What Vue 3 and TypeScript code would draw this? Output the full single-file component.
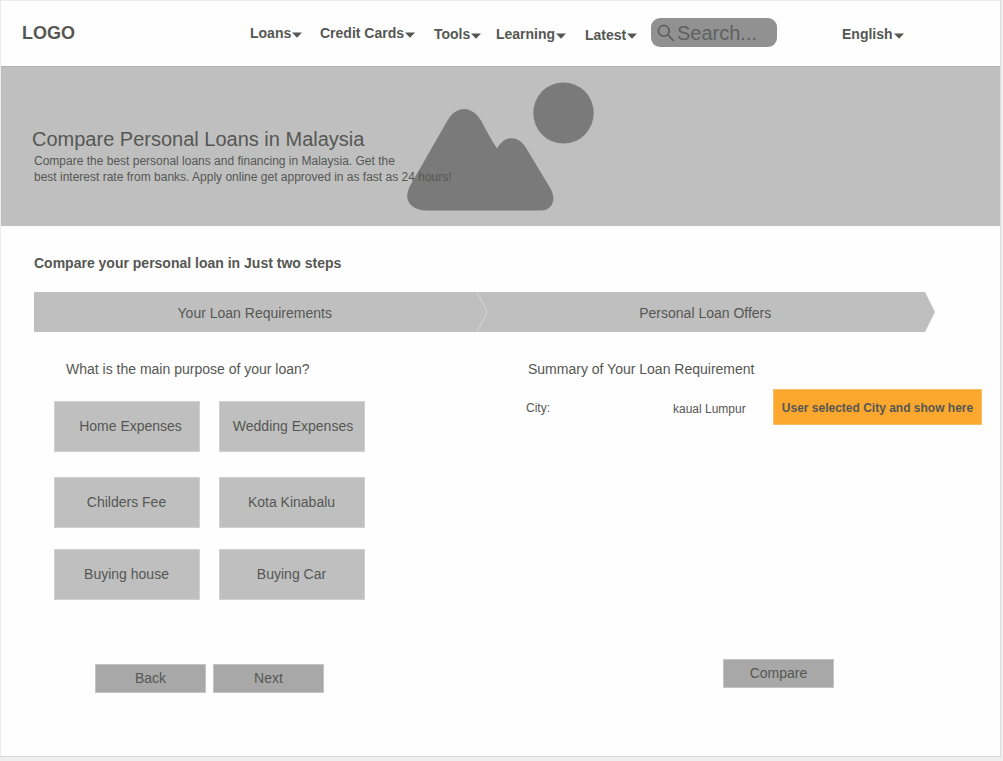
<script setup lang="ts">
interface NavItem {
  label: string
  key: string
}

const navItems: NavItem[] = [
  { label: 'Loans', key: 'loans' },
  { label: 'Credit Cards', key: 'cards' },
  { label: 'Tools', key: 'tools' },
  { label: 'Learning', key: 'learning' },
  { label: 'Latest', key: 'latest' },
]

const purposes: string[] = [
  'Home Expenses',
  'Wedding Expenses',
  'Childers Fee',
  'Kota Kinabalu',
  'Buying house',
  'Buying Car',
]
</script>

<template>
  <div class="page">
    <header class="header">
      <div class="logo">LOGO</div>
      <a v-for="item in navItems" :key="item.key" class="nav-item" :class="item.key">
        <span>{{ item.label }}</span>
        <svg class="caret" viewBox="0 0 10 6"><path d="M0 0.5H10L5 5.7Z" /></svg>
      </a>
      <div class="search">
        <svg class="lens" viewBox="0 0 18 18">
          <circle cx="6.8" cy="6.8" r="5.4" />
          <path d="M10.6 10.6L16.8 16.8" />
        </svg>
        <span>Search...</span>
      </div>
      <a class="nav-item english">
        <span>English</span>
        <svg class="caret" viewBox="0 0 10 6"><path d="M0 0.5H10L5 5.7Z" /></svg>
      </a>
    </header>

    <section class="hero">
      <svg class="landscape" viewBox="0 0 188 130">
        <ellipse cx="156.5" cy="31" rx="30.2" ry="30.6" />
        <path d="M40.5 38.500C49 23 65 23 74 38.500C78.500 46.500 84 58 90.300 66.500C97 53 111 53 118.500 65L143.500 106.500C150 118 145 128.500 134 128.500H20C4 128.500-3 118 1.500 107.500C2.500 104.500 4 102 5.500 99.500Z" />
      </svg>
      <div class="hero-copy">
        <h1>Compare Personal Loans in Malaysia</h1>
        <p>Compare the best personal loans and financing in Malaysia. Get the<br />best interest rate from banks. Apply online get approved in as fast as 24 hours!</p>
      </div>
    </section>

    <main class="content">
      <h2>Compare your personal loan in Just two steps</h2>
      <div class="steps">
        <div class="step first">Your Loan Requirements</div>
        <div class="step second">Personal Loan Offers</div>
        <svg class="divider" viewBox="0 0 12 40"><path d="M1 0L11 20L1 40" /></svg>
      </div>

      <div class="columns">
        <section class="requirements">
          <h3>What is the main purpose of your loan?</h3>
          <div class="purposes">
            <button v-for="purpose in purposes" :key="purpose" class="purpose"><span>{{ purpose }}</span></button>
          </div>
          <div class="actions">
            <button class="action">Back</button>
            <button class="action">Next</button>
          </div>
        </section>
        <section class="summary">
          <h3>Summary of Your Loan Requirement</h3>
          <div class="summary-row">
            <span class="term">City:</span>
            <span class="value">kaual Lumpur</span>
            <span class="note">User selected City and show here</span>
          </div>
          <button class="action compare">Compare</button>
        </section>
      </div>
    </main>
  </div>
</template>

<style>
body {
  margin: 0;
  background: #efefef;
}
</style>

<style scoped>
.page {
  box-sizing: border-box;
  width: 1001px;
  height: 757px;
  border: 1px solid #ececec;
  border-right-color: #dedede;
  border-bottom-color: #d8d8d8;
  background: #fefefe;
  color: #555753;
  font-family: "Liberation Sans", Arial, sans-serif;
  font-size: 14px;
  overflow: hidden;
}

h1, h2, h3, p {
  margin: 0;
  font-weight: normal;
}

button {
  box-sizing: border-box;
  margin: 0;
  padding: 0;
  color: inherit;
  font: inherit;
}

.header {
  display: grid;
  grid-template-columns: 228px 70px 114px 62px 89px 66px 191px 100px;
  height: 65px;
  padding-left: 21px;
  align-items: start;
}

.logo {
  padding-top: 22px;
  font-size: 18px;
  font-weight: bold;
  line-height: 21px;
}

.nav-item {
  display: flex;
  align-items: center;
  gap: 1px;
  padding-top: 24px;
  font-weight: bold;
  line-height: 16px;
  white-space: nowrap;
}

.tools, .learning, .english { padding-top: 25px; }
.latest { padding-top: 26px; }

.caret {
  width: 10px;
  height: 6px;
  margin-top: 3px;
  fill: #555753;
}

.latest .caret { margin-top: 1px; }

.search {
  display: flex;
  align-items: center;
  box-sizing: border-box;
  width: 126px;
  height: 29px;
  margin-top: 17px;
  padding-left: 6px;
  gap: 2px;
  border-radius: 9px;
  background: #919191;
  color: #606060;
  font-size: 20px;
  line-height: 28px;
}

.lens {
  width: 18px;
  height: 18px;
  fill: none;
  stroke: #606060;
  stroke-width: 1.7;
}

.hero {
  position: relative;
  box-sizing: border-box;
  height: 160px;
  padding: 60px 0 0 31px;
  border-top: 1px solid #b4b4b4;
  background: #bfbfbf;
}

.landscape {
  position: absolute;
  left: 406px;
  top: 15px;
  width: 188px;
  height: 130px;
  fill: #7a7a7a;
}

.hero-copy {
  position: relative;
}

h1 {
  font-size: 20px;
  line-height: 24px;
  white-space: nowrap;
}

p {
  padding: 2px 0 0 2px;
  font-size: 12px;
  line-height: 16px;
  white-space: nowrap;
}

.content {
  padding: 29px 0 0 33px;
}

h2 {
  font-size: 14px;
  font-weight: bold;
  line-height: 16px;
}

.steps {
  position: relative;
  display: flex;
  width: 901px;
  height: 40px;
  margin-top: 21px;
  background: #bfbfbf;
  clip-path: polygon(0 0, 891px 0, 100% 50%, 891px 100%, 0 100%);
  line-height: 42px;
  text-align: center;
}

.first { width: 442px; }
.second { width: 460px; }

.divider {
  position: absolute;
  left: 442px;
  top: 0;
  width: 12px;
  height: 40px;
  fill: none;
  stroke: #d6d6d6;
  stroke-width: 1;
}

.columns {
  display: grid;
  grid-template-columns: 459px 488px;
}

h3 {
  padding: 29px 0 0 32px;
  font-size: 14px;
  line-height: 16px;
}

.purposes {
  display: grid;
  grid-template-columns: 146px 146px;
  grid-template-rows: 76px 72px 51px;
  column-gap: 19px;
  margin: 24px 0 0 20px;
}

.purpose {
  height: 51px;
  padding: 0 1px 2px 0;
  border: 1px solid #d0d0d0;
  background: #bfbfbf;
}

.purpose:nth-child(1) { padding: 0 0 2px 7px; }
.purpose:nth-child(2) { padding: 0 0 2px 2px; }

.actions {
  display: flex;
  gap: 7px;
  margin: 64px 0 0 61px;
}

.action {
  width: 111px;
  height: 29px;
  padding-bottom: 2px;
  border: 1px solid #c4c4c4;
  background: #a8a8a8;
}

.summary h3 {
  padding-left: 35px;
}

.summary-row {
  display: grid;
  grid-template-columns: 147px 100px 209px;
  align-items: center;
  height: 36px;
  margin: 12px 0 0 33px;
  font-size: 12px;
}

.note {
  box-sizing: border-box;
  height: 36px;
  border: 1px solid #f6bd68;
  background: #fca82f;
  font-weight: bold;
  line-height: 36px;
  text-align: center;
  white-space: nowrap;
}

.term { padding-top: 2px; }
.value { padding-top: 3px; }

.compare {
  display: block;
  margin: 234px 0 0 230px;
}
</style>
